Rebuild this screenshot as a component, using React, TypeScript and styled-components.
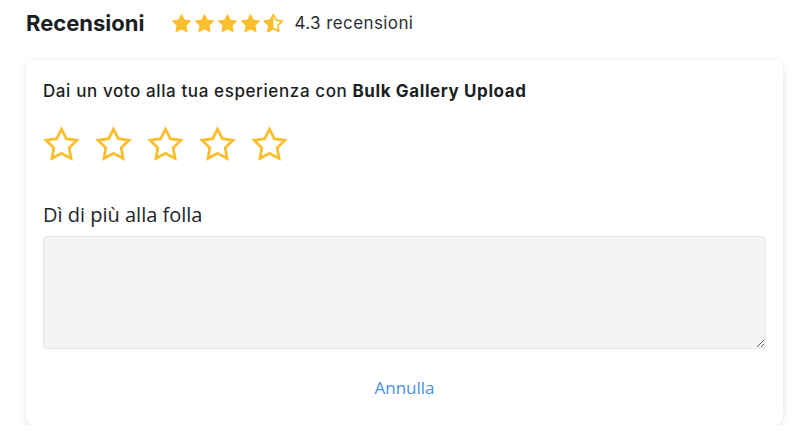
import React from "react";
import styled, { createGlobalStyle } from "styled-components";

const Global = createGlobalStyle`
  html, body { margin: 0; padding: 0; background: #ffffff; }
  body { font-family: "Inter", "Liberation Sans", sans-serif; color: #1f2328; }
`;

const Page = styled.div`
  padding: 8px 20px 0 26px;
  width: 803px;
  box-sizing: border-box;
`;

const Header = styled.div`
  display: flex;
  align-items: center;
  height: 30px;
`;

const Title = styled.h2`
  margin: 0;
  font-family: "Inter", sans-serif;
  font-weight: 700;
  font-size: 22px;
  letter-spacing: 0;
  color: #1b1f24;
`;

const Stars = styled.div`
  display: flex;
  gap: 2px;
  margin-left: 27px;
`;

const Score = styled.span`
  margin-left: 10px;
  font-size: 17px;
  letter-spacing: 0.4px;
  color: #2a2e33;
`;

const Card = styled.div`
  margin-top: 22px;
  width: 757px;
  box-sizing: border-box;
  background: #fff;
  border-radius: 8px;
  box-shadow: 0 1px 4px rgba(0, 0, 0, 0.08), 0 4px 14px rgba(0, 0, 0, 0.06);
  padding: 19px 17px 25px;
  display: flex;
  flex-direction: column;
`;

const Prompt = styled.p`
  margin: 0;
  font-size: 17px;
  line-height: 24px;
  letter-spacing: 0.6px;
  font-weight: 500;
  color: #1b1f24;
  b { font-weight: 700; }
`;

const RateRow = styled.div`
  display: flex;
  gap: 15px;
  margin-top: 23px;
`;

const Label = styled.label`
  margin-top: 38px;
  font-family: "Open Sans", sans-serif;
  font-size: 20px;
  line-height: 28px;
  color: #22262b;
`;

const Area = styled.textarea`
  margin-top: 7px;
  height: 113px;
  box-sizing: border-box;
  background: #f3f4f6;
  border: 1px solid #e3e6ea;
  border-radius: 4px;
  resize: vertical;
  font-family: "Open Sans", sans-serif;
  font-size: 15px;
`;

const Cancel = styled.button`
  align-self: center;
  margin-top: 27px;
  background: none;
  border: none;
  padding: 0;
  font-family: "Open Sans", sans-serif;
  font-size: 17px;
  line-height: 24px;
  color: #4a90e2;
  cursor: pointer;
`;

const PTS = "12,2 15.09,8.26 22,9.27 17,14.14 18.18,21.02 12,17.77 5.82,21.02 7,14.14 2,9.27 8.91,8.26";
const YELLOW = "#fbbf2d";

const SmallStar = ({ half }: { half?: boolean }) => (
  <svg width="21" height="21" viewBox="0 0 24 24">
    <defs>
      <clipPath id="halfclip">
        <rect x="0" y="0" width="12" height="24" />
      </clipPath>
    </defs>
    {half ? (
      <>
        <polygon points={PTS} fill="none" stroke={YELLOW} strokeWidth="2" strokeLinejoin="round" />
        <polygon points={PTS} fill={YELLOW} stroke={YELLOW} strokeWidth="2" strokeLinejoin="round" clipPath="url(#halfclip)" />
      </>
    ) : (
      <polygon points={PTS} fill={YELLOW} stroke={YELLOW} strokeWidth="1.5" strokeLinejoin="round" />
    )}
  </svg>
);

const BigStar = () => (
  <svg width="37" height="37" viewBox="0 0 24 24">
    <polygon points={PTS} fill="none" stroke={YELLOW} strokeWidth="1.8" strokeLinejoin="miter" />
  </svg>
);

export default function App() {
  return (
    <>
      <Global />
      <Page>
        <Header>
          <Title>Recensioni</Title>
          <Stars>
            <SmallStar />
            <SmallStar />
            <SmallStar />
            <SmallStar />
            <SmallStar half />
          </Stars>
          <Score>4.3 recensioni</Score>
        </Header>
        <Card>
          <Prompt>
            Dai un voto alla tua esperienza con <b>Bulk Gallery Upload</b>
          </Prompt>
          <RateRow>
            <BigStar />
            <BigStar />
            <BigStar />
            <BigStar />
            <BigStar />
          </RateRow>
          <Label>Dì di più alla folla</Label>
          <Area />
          <Cancel>Annulla</Cancel>
        </Card>
      </Page>
    </>
  );
}
